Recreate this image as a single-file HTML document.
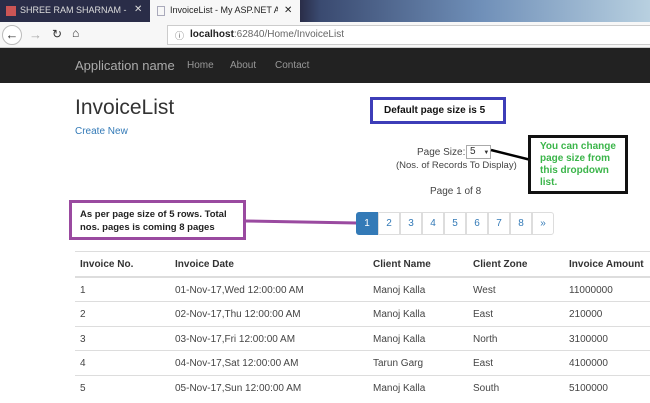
<!DOCTYPE html><html><head><style>
*{margin:0;padding:0;box-sizing:border-box}
body{width:650px;height:403px;overflow:hidden;background:#fff;font-family:"Liberation Sans",sans-serif;position:relative;color:#333}
.a{position:absolute;white-space:nowrap}
.pg{position:absolute;top:212px;height:23px;width:22px;border:1px solid #ddd;color:#337ab7;font-size:10px;text-align:center;line-height:21px;margin-left:-1px}
.row{position:absolute;left:75px;width:575px;border-top:1px solid #ddd;height:25px;font-size:10px;color:#444}
.row span{position:absolute;top:7px}
</style></head><body>
<div class="a" style="left:0;top:0;width:650px;height:22px;background:linear-gradient(90deg,#2a2d48 0,#2a2d48 300px,#3a4a70 320px,#6f8fb8 480px,#b8d0e0 650px)"></div>
<div class="a" style="left:6px;top:6px;width:10px;height:10px;background:#c55"></div>
<div class="a" style="left:20px;top:5px;width:108px;overflow:hidden;font-size:9px;color:#ddd">SHREE RAM SHARNAM - Inter</div>
<div class="a" style="left:134px;top:4px;font-size:10px;color:#ddd">✕</div>
<div class="a" style="left:150px;top:0;width:150px;height:23px;background:#f7f7f7"></div>
<div class="a" style="left:157px;top:6px;width:8px;height:10px;border:1px solid #aab"></div>
<div class="a" style="left:170px;top:5px;width:108px;overflow:hidden;font-size:9px;color:#222">InvoiceList - My ASP.NET Appl</div>
<div class="a" style="left:284px;top:5px;font-size:10px;color:#222">✕</div>
<div class="a" style="left:0;top:22px;width:650px;height:26px;background:#f7f7f7;border-bottom:1px solid #ccc"></div>
<div class="a" style="left:2px;top:25px;width:20px;height:20px;border:1px solid #bbb;border-radius:50%;text-align:center;font-size:13px;line-height:18px;background:#fff">←</div>
<div class="a" style="left:29px;top:27px;font-size:13px;color:#aaa">→</div>
<div class="a" style="left:52px;top:27px;font-size:12px;color:#333">↻</div>
<div class="a" style="left:72px;top:26px;font-size:12px;color:#333">⌂</div>
<div class="a" style="left:167px;top:25px;width:483px;height:20px;background:#fff;border:1px solid #ccc;border-right:0"></div>
<div class="a" style="left:175px;top:29px;font-size:9px;color:#666">ⓘ</div>
<div class="a" style="left:190px;top:29px;font-size:10px;color:#666"><b style="color:#222">localhost</b>:62840/Home/InvoiceList</div>
<div class="a" style="left:0;top:48px;width:650px;height:35px;background:#222"></div>
<div class="a" style="left:75px;top:58px;font-size:13px;color:#aaa">Application name</div>
<div class="a" style="left:187px;top:60px;font-size:10px;color:#999">Home</div>
<div class="a" style="left:230px;top:60px;font-size:10px;color:#999">About</div>
<div class="a" style="left:275px;top:60px;font-size:10px;color:#999">Contact</div>
<div class="a" style="left:75px;top:96px;font-size:21px;color:#333">InvoiceList</div>
<div class="a" style="left:75px;top:126px;font-size:10px;color:#337ab7">Create New</div>
<div class="a" style="left:370px;top:97px;width:136px;height:27px;border:3px solid #3d3db8;font-size:10px;font-weight:bold;color:#111;padding:5px 0 0 11px">Default page size is 5</div>
<div class="a" style="left:417px;top:147px;font-size:10px;color:#444">Page Size:</div>
<div class="a" style="left:466px;top:145px;width:25px;height:14px;border:1px solid #aaa;font-size:10px;padding-left:3px;line-height:12px">5 <span style="font-size:6px;margin-left:5px">▼</span></div>
<div class="a" style="left:396px;top:160px;font-size:9.5px;color:#444">(Nos. of Records To Display)</div>
<div class="a" style="left:430px;top:186px;font-size:10px;color:#444">Page 1 of 8</div>
<svg class="a" style="left:0;top:0" width="650" height="403"><line x1="491" y1="150" x2="531" y2="160" stroke="#000" stroke-width="2.5"/><line x1="245" y1="221" x2="357" y2="223" stroke="#9a4aa0" stroke-width="3"/></svg>
<div class="a" style="left:528px;top:135px;width:100px;height:59px;border:3px solid #111;background:#fff;font-size:10px;font-weight:bold;color:#3bb54a;padding:3px 0 0 9px;line-height:12px;white-space:normal">You can change page size from this dropdown list.</div>
<div class="a" style="left:69px;top:200px;width:177px;height:40px;border:3px solid #9a4aa0;background:#fff;font-size:9.5px;font-weight:bold;color:#222;padding:5px 0 0 8px;line-height:13px">As per page size of 5 rows. Total<br>nos. pages is coming 8 pages</div>
<div class="pg" style="left:357px;background:#337ab7;border-color:#337ab7;color:#fff;border-radius:3px 0 0 3px">1</div>
<div class="pg" style="left:379px">2</div><div class="pg" style="left:401px">3</div><div class="pg" style="left:423px">4</div><div class="pg" style="left:445px">5</div><div class="pg" style="left:467px">6</div><div class="pg" style="left:489px">7</div><div class="pg" style="left:511px">8</div><div class="pg" style="left:533px;border-radius:0 3px 3px 0">»</div>
<div class="row" style="top:251px;font-weight:bold;color:#333;border-bottom:1px solid #ddd;height:26px"><span style="left:5px">Invoice No.</span><span style="left:100px">Invoice Date</span><span style="left:298px">Client Name</span><span style="left:398px">Client Zone</span><span style="left:494px">Invoice Amount</span></div>
<div class="row" style="top:277px"><span style="left:5px">1</span><span style="left:100px">01-Nov-17,Wed 12:00:00 AM</span><span style="left:298px">Manoj Kalla</span><span style="left:398px">West</span><span style="left:494px">11000000</span></div>
<div class="row" style="top:301px"><span style="left:5px">2</span><span style="left:100px">02-Nov-17,Thu 12:00:00 AM</span><span style="left:298px">Manoj Kalla</span><span style="left:398px">East</span><span style="left:494px">210000</span></div>
<div class="row" style="top:326px"><span style="left:5px">3</span><span style="left:100px">03-Nov-17,Fri 12:00:00 AM</span><span style="left:298px">Manoj Kalla</span><span style="left:398px">North</span><span style="left:494px">3100000</span></div>
<div class="row" style="top:350px"><span style="left:5px">4</span><span style="left:100px">04-Nov-17,Sat 12:00:00 AM</span><span style="left:298px">Tarun Garg</span><span style="left:398px">East</span><span style="left:494px">4100000</span></div>
<div class="row" style="top:375px"><span style="left:5px">5</span><span style="left:100px">05-Nov-17,Sun 12:00:00 AM</span><span style="left:298px">Manoj Kalla</span><span style="left:398px">South</span><span style="left:494px">5100000</span></div>
</body></html>
